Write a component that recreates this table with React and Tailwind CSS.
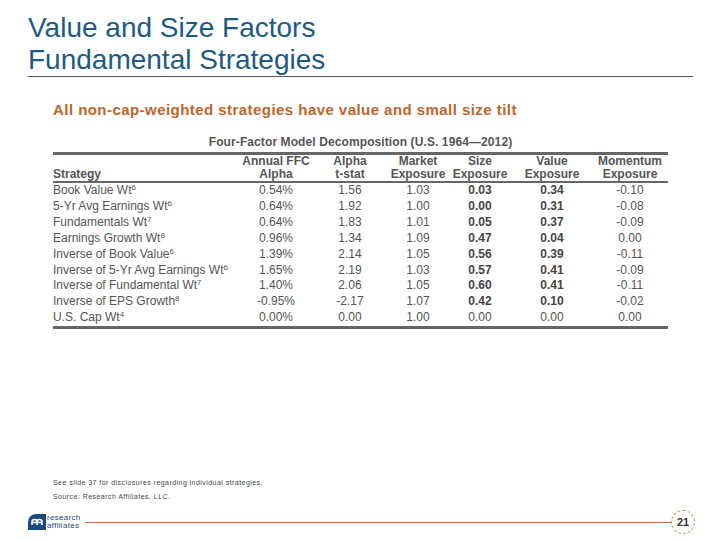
import React from "react";

const rows = [
  { name: "Book Value Wt", sup: "6", ffc: "0.54%", t: "1.56", mkt: "1.03", size: "0.03", value: "0.34", mom: "-0.10", bold: true },
  { name: "5-Yr Avg Earnings Wt", sup: "6", ffc: "0.64%", t: "1.92", mkt: "1.00", size: "0.00", value: "0.31", mom: "-0.08", bold: true },
  { name: "Fundamentals Wt", sup: "7", ffc: "0.64%", t: "1.83", mkt: "1.01", size: "0.05", value: "0.37", mom: "-0.09", bold: true },
  { name: "Earnings Growth Wt", sup: "8", ffc: "0.96%", t: "1.34", mkt: "1.09", size: "0.47", value: "0.04", mom: "0.00", bold: true },
  { name: "Inverse of Book Value", sup: "6", ffc: "1.39%", t: "2.14", mkt: "1.05", size: "0.56", value: "0.39", mom: "-0.11", bold: true },
  { name: "Inverse of 5-Yr Avg Earnings Wt", sup: "6", ffc: "1.65%", t: "2.19", mkt: "1.03", size: "0.57", value: "0.41", mom: "-0.09", bold: true },
  { name: "Inverse of Fundamental Wt", sup: "7", ffc: "1.40%", t: "2.06", mkt: "1.05", size: "0.60", value: "0.41", mom: "-0.11", bold: true },
  { name: "Inverse of EPS Growth", sup: "8", ffc: "-0.95%", t: "-2.17", mkt: "1.07", size: "0.42", value: "0.10", mom: "-0.02", bold: true },
  { name: "U.S. Cap Wt", sup: "4", ffc: "0.00%", t: "0.00", mkt: "1.00", size: "0.00", value: "0.00", mom: "0.00", bold: false },
];

const cols = "grid grid-cols-[187px_72px_76px_60px_64px_80px_76px]";

const Logo = () => (
  <svg width="18" height="16" viewBox="0 0 18 16">
    <path d="M0 16 L0 9 Q0 0 9 0 L18 0 L18 16 Z" fill="#1b4a82" />
    <path d="M4 11 L4 8 Q4 5.5 6.5 5.5 Q9 5.5 9 8 L9 11 M9 11 L9 8 Q9 5.5 11.5 5.5 Q14 5.5 14 8 L14 11 M4 8.5 L14 8.5" stroke="#fff" strokeWidth="1.6" fill="none" />
  </svg>
);

export default function App() {
  return (
    <div className="w-[720px] h-[540px] bg-white overflow-hidden font-['Liberation_Sans',Arial,sans-serif]">
      <div className="ml-[28px] mr-[27px] pt-[12px] border-b border-[#555] text-[28px] leading-[32px] text-[#1d5a85]">
        <div>Value and Size Factors</div>
        <div>Fundamental Strategies</div>
      </div>

      <div className="ml-[53px] mt-[24px] text-[15px] leading-[18px] font-bold text-[#c0642c] tracking-[0.45px]">
        All non-cap-weighted strategies have value and small size tilt
      </div>

      <div className="ml-[53px] w-[615px] mt-[15px]">
        <div className="text-center text-[12px] leading-[16px] font-bold text-[#555] tracking-[0.1px]">
          Four-Factor Model Decomposition (U.S. 1964—2012)
        </div>
        <div className="mt-[2px] border-t-[3px] border-b-[3px] border-[#666] text-[12px] text-[#555]">
          <div className={`${cols} border-b-2 border-[#666] leading-[13px] font-bold`}>
            <div className="self-end">Strategy</div>
            <div className="text-center">Annual FFC<br />Alpha</div>
            <div className="text-center">Alpha<br />t-stat</div>
            <div className="text-center">Market<br />Exposure</div>
            <div className="text-center">Size<br />Exposure</div>
            <div className="text-center">Value<br />Exposure</div>
            <div className="text-center">Momentum<br />Exposure</div>
          </div>
          {rows.map((r) => (
            <div key={r.name} className={`${cols} leading-[15.9px] whitespace-nowrap`}>
              <div>
                {r.name}
                <sup className="text-[8px]">{r.sup}</sup>
              </div>
              <div className="text-center">{r.ffc}</div>
              <div className="text-center">{r.t}</div>
              <div className="text-center">{r.mkt}</div>
              <div className={`text-center ${r.bold ? "font-bold text-[#444]" : ""}`}>{r.size}</div>
              <div className={`text-center ${r.bold ? "font-bold text-[#444]" : ""}`}>{r.value}</div>
              <div className="text-center">{r.mom}</div>
            </div>
          ))}
        </div>
      </div>

      <div className="ml-[53px] mt-[147px] text-[7px] leading-[14px] text-[#444] tracking-[0.45px]">
        <div>See slide 37 for disclosures regarding individual strategies.</div>
        <div>Source: Research Affiliates, LLC.</div>
      </div>

      <div className="mt-[6px] ml-[28px] mr-[25px] h-[24px] flex items-center">
        <Logo />
        <div className="ml-[1px] text-[8px] leading-[8px] text-[#1b4a82] tracking-[0.3px]">
          <div>research</div>
          <div>affiliates</div>
        </div>
        <div className="flex-1 ml-[4px] h-px bg-[#c0703a]" />
        <div className="w-[24px] h-[24px] rounded-full border border-dashed border-[#c8905a] flex items-center justify-center text-[11px] font-bold text-[#333]">
          21
        </div>
      </div>
    </div>
  );
}
